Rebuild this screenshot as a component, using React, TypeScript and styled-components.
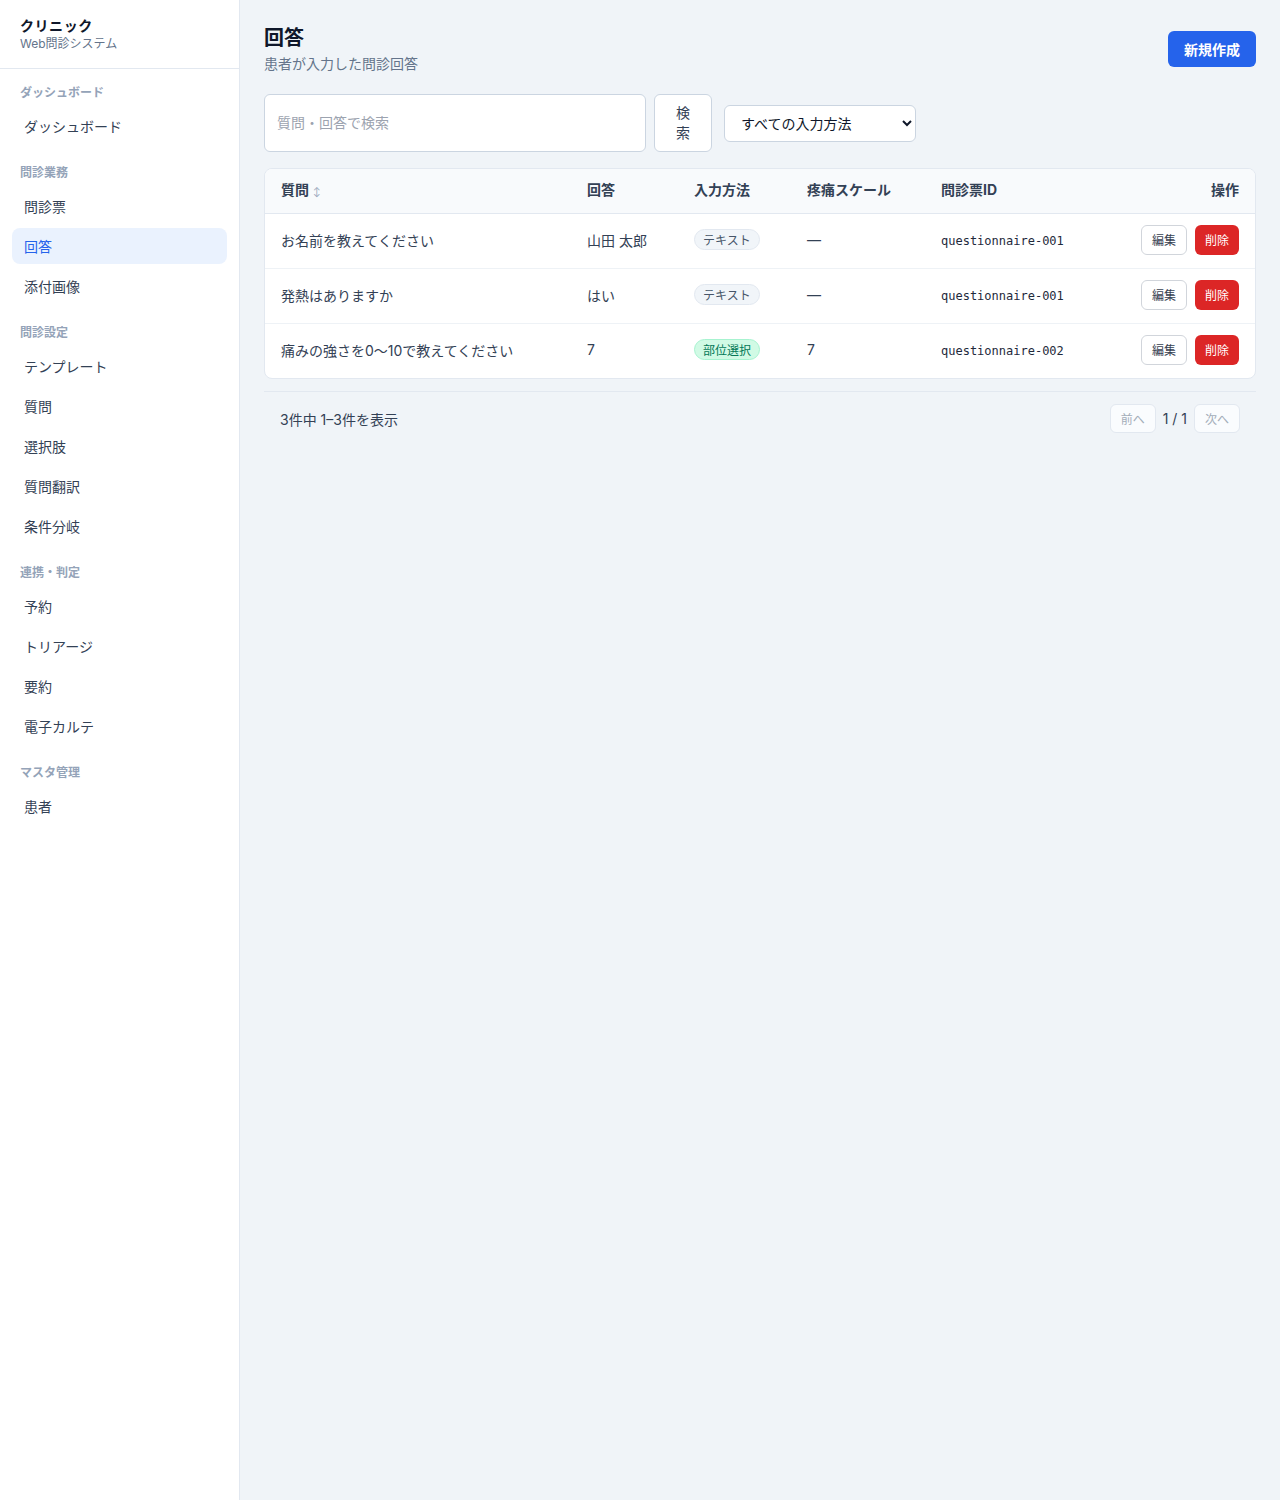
import * as React from 'react';
import styled, { createGlobalStyle } from 'styled-components';

const GlobalStyle = createGlobalStyle`
  html, body {
    margin: 0;
    padding: 0;
    background: #f0f4f8;
    font-family: Inter, "Noto Sans CJK JP", sans-serif;
    color: #1e293b;
  }
  * { box-sizing: border-box; }
`;

interface NavGroup {
  label: string;
  items: string[];
}

interface AnswerRow {
  question: string;
  answer: string;
  method: string;
  accent: boolean;
  pain: string;
  questionnaireId: string;
}

const navGroups: NavGroup[] = [
  { label: 'ダッシュボード', items: ['ダッシュボード'] },
  { label: '問診業務', items: ['問診票', '回答', '添付画像'] },
  { label: '問診設定', items: ['テンプレート', '質問', '選択肢', '質問翻訳', '条件分岐'] },
  { label: '連携・判定', items: ['予約', 'トリアージ', '要約', '電子カルテ'] },
  { label: 'マスタ管理', items: ['患者'] },
];

const rows: AnswerRow[] = [
  { question: 'お名前を教えてください', answer: '山田 太郎', method: 'テキスト', accent: false, pain: '—', questionnaireId: 'questionnaire-001' },
  { question: '発熱はありますか', answer: 'はい', method: 'テキスト', accent: false, pain: '—', questionnaireId: 'questionnaire-001' },
  { question: '痛みの強さを0〜10で教えてください', answer: '7', method: '部位選択', accent: true, pain: '7', questionnaireId: 'questionnaire-002' },
];

const Layout = styled.div`
  display: flex;
  min-height: 1500px;
`;

const Sidebar = styled.aside`
  width: 240px;
  flex-shrink: 0;
  background: #ffffff;
  border-right: 1px solid #e2e8f0;
`;

const Brand = styled.div`
  height: 69px;
  padding: 16px 20px 0;
  border-bottom: 1px solid #e2e8f0;
`;

const BrandTitle = styled.div`
  font-size: 14px;
  font-weight: 700;
  line-height: 20px;
  color: #0f172a;
  letter-spacing: 0.04em;
`;

const BrandSub = styled.div`
  font-size: 12px;
  line-height: 16px;
  color: #64748b;
`;

const Nav = styled.nav`
  padding: 16px 12px;
`;

const Group = styled.div`
  display: flex;
  flex-direction: column;
  gap: 4px;
  & + & {
    margin-top: 21px;
  }
`;

const GroupLabel = styled.div`
  font-size: 12px;
  font-weight: 700;
  line-height: 16px;
  color: #94a3b8;
  padding: 0 8px;
  margin-bottom: 3px;
`;

const NavItem = styled.a<{ $active?: boolean }>`
  display: flex;
  align-items: center;
  height: 36px;
  padding: 0 12px 1px;
  border-radius: 8px;
  font-size: 14px;
  color: ${p => (p.$active ? '#2563eb' : '#334155')};
  background: ${p => (p.$active ? '#eaf2fe' : 'transparent')};
  text-decoration: none;
`;

const Main = styled.main`
  flex: 1;
  padding: 24px;
`;

const PageHeader = styled.div`
  display: flex;
  justify-content: space-between;
  align-items: flex-start;
`;

const Title = styled.h1`
  margin: 0;
  font-size: 20px;
  line-height: 28px;
  font-weight: 700;
  color: #0f172a;
`;

const Subtitle = styled.p`
  margin: 2px 0 0;
  font-size: 14px;
  line-height: 20px;
  color: #64748b;
`;

const PrimaryButton = styled.button`
  margin-top: 7px;
  height: 36px;
  padding: 0 16px 1px;
  border: none;
  border-radius: 6px;
  background: #2563eb;
  color: #ffffff;
  font-family: inherit;
  font-size: 14px;
  font-weight: 700;
`;

const Toolbar = styled.div`
  display: flex;
  align-items: center;
  margin-top: 20px;
`;

const SearchInput = styled.input`
  width: 382px;
  height: 58px;
  padding: 0 12px 1px;
  border: 1px solid #cbd5e1;
  border-radius: 6px;
  background: #ffffff;
  font-family: inherit;
  font-size: 14px;
  &::placeholder {
    color: #9ca3af;
  }
`;

const SearchButton = styled.button`
  width: 58px;
  height: 58px;
  margin-left: 8px;
  padding: 0 20px 1px;
  border: 1px solid #cbd5e1;
  border-radius: 6px;
  background: #ffffff;
  font-family: inherit;
  font-size: 14px;
  line-height: 20px;
  color: #334155;
`;

const Select = styled.select`
  width: 192px;
  height: 37px;
  margin-left: 12px;
  padding: 0 8px 0 12px;
  border: 1px solid #cbd5e1;
  border-radius: 6px;
  background: #ffffff;
  font-family: inherit;
  font-size: 14px;
  color: #0f172a;
`;

const Card = styled.div`
  margin-top: 16px;
  background: #ffffff;
  border: 1px solid #e2e8f0;
  border-radius: 8px;
  overflow: hidden;
`;

const Table = styled.table`
  width: 100%;
  border-collapse: collapse;
  table-layout: fixed;
`;

const Th = styled.th<{ $right?: boolean }>`
  height: 44px;
  padding: 0 16px 3px;
  background: #f8fafc;
  border-bottom: 1px solid #e2e8f0;
  font-size: 14px;
  font-weight: 700;
  color: #334155;
  text-align: ${p => (p.$right ? 'right' : 'left')};
`;

const SortMark = styled.span`
  margin-left: 4px;
  font-size: 9px;
  font-weight: 400;
  color: #94a3b8;
`;

const Tr = styled.tr`
  & + & td {
    border-top: 1px solid #eef2f6;
  }
`;

const Td = styled.td<{ $right?: boolean }>`
  height: 55px;
  padding: 0 16px 2px;
  font-size: 14px;
  color: #334155;
  text-align: ${p => (p.$right ? 'right' : 'left')};
  white-space: nowrap;
`;

const Mono = styled.span`
  font-family: "DejaVu Sans Mono", monospace;
  font-size: 12px;
  color: #1e293b;
`;

const Badge = styled.span<{ $accent?: boolean }>`
  display: inline-flex;
  align-items: center;
  height: 21px;
  padding: 0 8px;
  border-radius: 999px;
  font-size: 12px;
  color: ${p => (p.$accent ? '#047857' : '#475569')};
  background: ${p => (p.$accent ? '#d1fae5' : '#f1f5f9')};
  border: 1px solid ${p => (p.$accent ? '#a7f3d0' : '#e2e8f0')};
`;

const Actions = styled.div`
  display: flex;
  justify-content: flex-end;
  gap: 8px;
`;

const SmallButton = styled.button<{ $danger?: boolean }>`
  height: 30px;
  padding: 0 10px;
  border-radius: 6px;
  font-family: inherit;
  font-size: 12px;
  border: ${p => (p.$danger ? 'none' : '1px solid #d1d5db')};
  background: ${p => (p.$danger ? '#dc2626' : '#ffffff')};
  color: ${p => (p.$danger ? '#ffffff' : '#374151')};
`;

const Footer = styled.div`
  display: flex;
  justify-content: space-between;
  align-items: center;
  margin-top: 12px;
  padding: 12px 16px;
  border-top: 1px solid #e2e8f0;
`;

const Summary = styled.span`
  font-size: 14px;
  color: #334155;
`;

const Pager = styled.div`
  display: flex;
  align-items: center;
  gap: 7px;
`;

const PageButton = styled.button`
  height: 29px;
  padding: 0 10px;
  border: 1px solid #e2e8f0;
  border-radius: 6px;
  background: #fafcfe;
  color: #a3adb9;
  font-family: inherit;
  font-size: 12px;
`;

const PageInfo = styled.span`
  font-size: 14px;
  color: #334155;
`;

export default function App() {
  return (
    <>
      <GlobalStyle />
      <Layout>
        <Sidebar>
          <Brand>
            <BrandTitle>クリニック</BrandTitle>
            <BrandSub>Web問診システム</BrandSub>
          </Brand>
          <Nav>
            {navGroups.map(group => (
              <Group key={group.label}>
                <GroupLabel>{group.label}</GroupLabel>
                {group.items.map(item => (
                  <NavItem key={item} $active={item === '回答'}>
                    {item}
                  </NavItem>
                ))}
              </Group>
            ))}
          </Nav>
        </Sidebar>
        <Main>
          <PageHeader>
            <div>
              <Title>回答</Title>
              <Subtitle>患者が入力した問診回答</Subtitle>
            </div>
            <PrimaryButton>新規作成</PrimaryButton>
          </PageHeader>
          <Toolbar>
            <SearchInput placeholder="質問・回答で検索" />
            <SearchButton>検索</SearchButton>
            <Select defaultValue="all">
              <option value="all">すべての入力方法</option>
              <option value="text">テキスト</option>
              <option value="body">部位選択</option>
            </Select>
          </Toolbar>
          <Card>
            <Table>
              <colgroup>
                <col style={{ width: 306 }} />
                <col style={{ width: 107 }} />
                <col style={{ width: 113 }} />
                <col style={{ width: 134 }} />
                <col style={{ width: 180 }} />
                <col />
              </colgroup>
              <thead>
                <tr>
                  <Th>
                    質問<SortMark>↕</SortMark>
                  </Th>
                  <Th>回答</Th>
                  <Th>入力方法</Th>
                  <Th>疼痛スケール</Th>
                  <Th>問診票ID</Th>
                  <Th $right>操作</Th>
                </tr>
              </thead>
              <tbody>
                {rows.map((row, i) => (
                  <Tr key={i}>
                    <Td>{row.question}</Td>
                    <Td>{row.answer}</Td>
                    <Td>
                      <Badge $accent={row.accent}>{row.method}</Badge>
                    </Td>
                    <Td>{row.pain}</Td>
                    <Td>
                      <Mono>{row.questionnaireId}</Mono>
                    </Td>
                    <Td $right>
                      <Actions>
                        <SmallButton>編集</SmallButton>
                        <SmallButton $danger>削除</SmallButton>
                      </Actions>
                    </Td>
                  </Tr>
                ))}
              </tbody>
            </Table>
          </Card>
          <Footer>
            <Summary>3件中 1–3件を表示</Summary>
            <Pager>
              <PageButton disabled>前へ</PageButton>
              <PageInfo>1 / 1</PageInfo>
              <PageButton disabled>次へ</PageButton>
            </Pager>
          </Footer>
        </Main>
      </Layout>
    </>
  );
}
